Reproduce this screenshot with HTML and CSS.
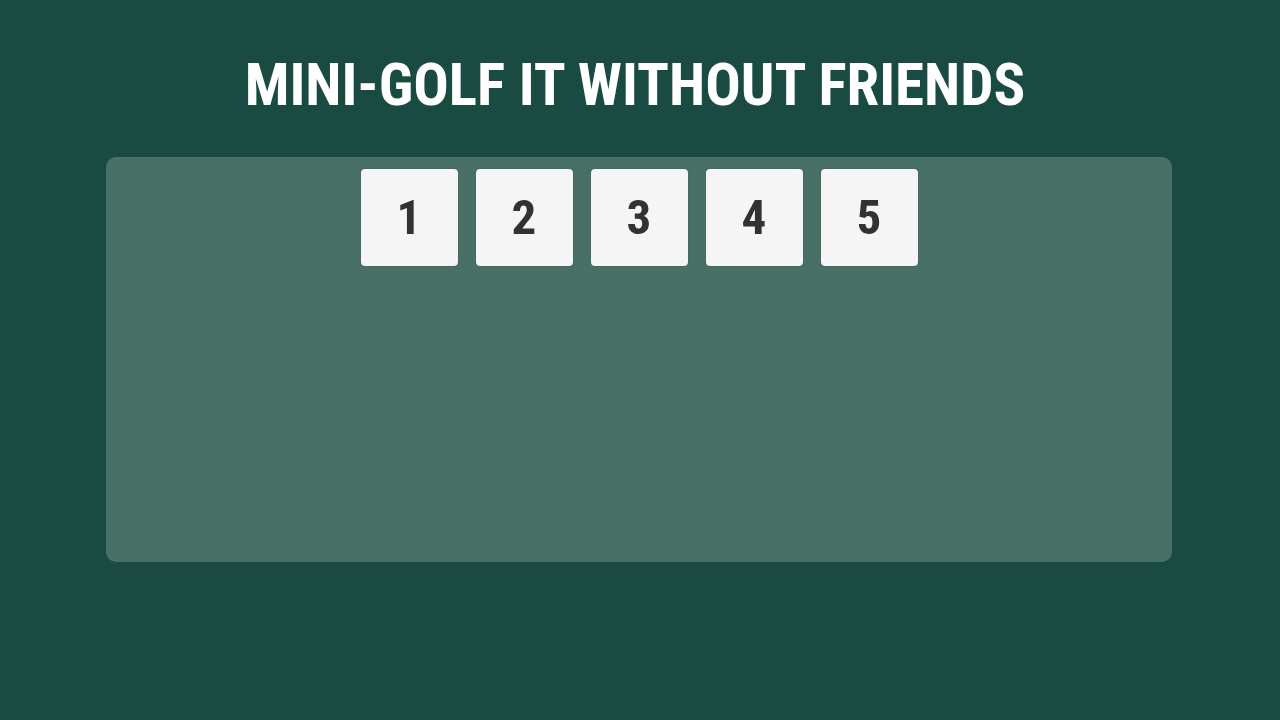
FILE: index.html
```html
<!DOCTYPE html>
<html lang="en">
<head>
  <meta charset="UTF-8" />
  <meta name="viewport" content="width=device-width, initial-scale=1" />
  <title>Mini-Golf It Without Friends</title>
  <link rel="stylesheet" href="styles.css">
</head>
<body>

  <h1>MINI-GOLF IT WITHOUT FRIENDS</h1>

  <main class="levels">
    <button class="level" type="button">1</button>
    <button class="level" type="button">2</button>
    <button class="level" type="button">3</button>
    <button class="level" type="button">4</button>
    <button class="level" type="button">5</button>
  </main>

</body>
</html>
```
FILE: styles.css
```css
body {
  margin: 0;
  padding: 53px 108px 53px 106px;
  background: #1a4b43;
  font-family: 'Roboto Condensed', Roboto, 'Liberation Sans', sans-serif;
}

h1 {
  margin: 0 8px 40px 0;
  font-size: 59px;
  line-height: 64px;
  font-weight: bold;
  text-align: center;
  color: #fff;
}

/* Level select panel */
.levels {
  display: flex;
  flex-wrap: wrap;
  justify-content: center;
  align-content: flex-start;
  gap: 18px;
  min-height: 405px;
  padding: 12px;
  box-sizing: border-box;
  border-radius: 10px;
  background: #497067;
}

.level {
  width: 97px;
  height: 97px;
  padding: 0;
  border: none;
  border-radius: 4px;
  background: #f5f5f5;
  box-shadow: 0 0 1px rgba(0, 0, 0, 0.5);
  font-family: inherit;
  font-size: 49px;
  font-weight: bold;
  color: #323232;
  cursor: pointer;
}

.level:hover {
  background: #fff;
}
```
